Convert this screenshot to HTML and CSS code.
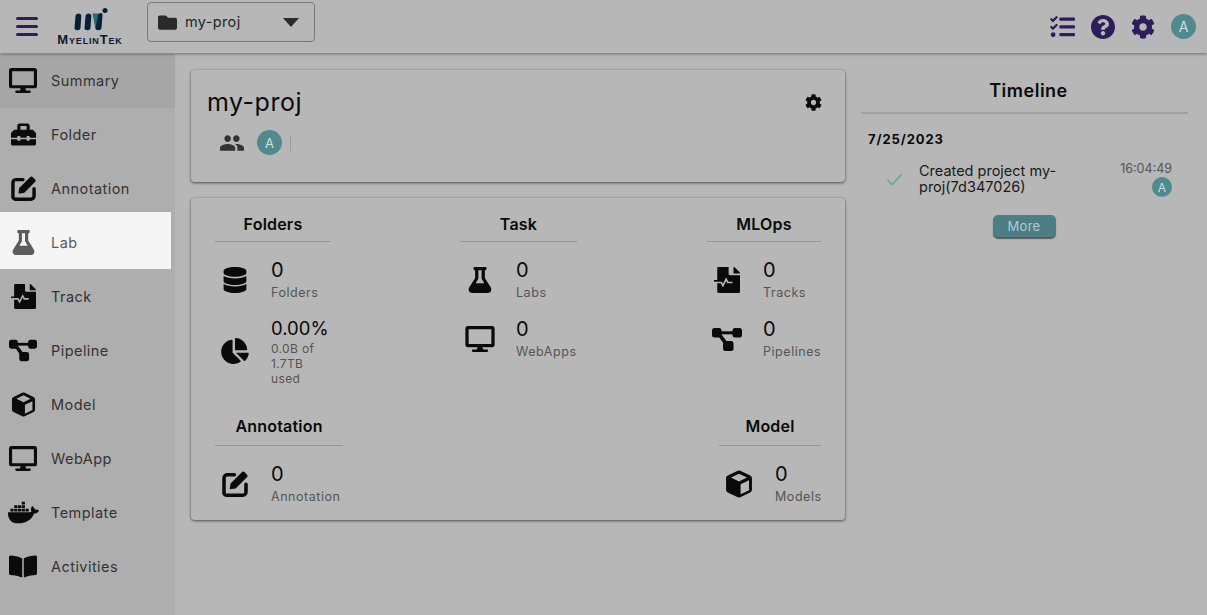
FILE: index.html
```html
<!DOCTYPE html>
<html lang="en">
<head>
<meta charset="utf-8">
<title>my-proj</title>
<link rel="stylesheet" href="styles.css">
</head>
<body>
<svg class="defs" aria-hidden="true">
  <symbol id="i-desktop" viewBox="0 0 576 512"><path d="M528 0H48C21.5 0 0 21.5 0 48v320c0 26.5 21.5 48 48 48h192l-16 48h-72c-13.3 0-24 10.7-24 24s10.7 24 24 24h272c13.3 0 24-10.7 24-24s-10.7-24-24-24h-72l-16-48h192c26.5 0 48-21.5 48-48V48c0-26.5-21.5-48-48-48zm-16 352H64V64h448v288z"/></symbol>
  <symbol id="i-toolbox" viewBox="0 0 512 512"><path d="M502.63 214.63l-45.25-45.25c-6-6-14.14-9.37-22.63-9.37H384V80c0-26.51-21.49-48-48-48H176c-26.51 0-48 21.49-48 48v80H77.25c-8.49 0-16.62 3.37-22.63 9.37L9.37 214.63c-6 6-9.37 14.14-9.37 22.63V320h128v-16c0-8.84 7.16-16 16-16h32c8.84 0 16 7.16 16 16v16h128v-16c0-8.84 7.16-16 16-16h32c8.84 0 16 7.16 16 16v16h128v-82.75c0-8.48-3.37-16.62-9.37-22.62zM320 160H192V80h128v80zm64 208c0 8.84-7.16 16-16 16h-32c-8.84 0-16-7.16-16-16v-16H192v16c0 8.84-7.16 16-16 16h-32c-8.84 0-16-7.16-16-16v-16H0v96c0 17.67 14.33 32 32 32h448c17.67 0 32-14.33 32-32v-96H384v16z"/></symbol>
  <symbol id="i-edit" viewBox="1.500 1 22 22"><path d="M12 4.200H6A2.800 2.800 0 0 0 3.200 7v13A2.800 2.800 0 0 0 6 21.500h13a2.800 2.800 0 0 0 2.800-2.800v-6.500" fill="none" stroke="currentColor" stroke-width="3" stroke-linecap="round"/><path d="M8 16.500l.7-5L18.300 2c.7-.7 1.600-.7 2.200-.1l2.200 2.200c.6.600.6 1.500-.1 2.200l-9.600 9.600z"/></symbol>
  <symbol id="i-flask" viewBox="0 0 448 512"><path d="M437.2 403.5L320 215V64h8c13.3 0 24-10.7 24-24V24c0-13.3-10.7-24-24-24H120c-13.3 0-24 10.7-24 24v16c0 13.300 10.700 24 24 24h8v151L10.800 403.500C-18.500 450.600 15.300 512 70.900 512h306.200c55.700 0 89.400-61.500 60.100-108.500zM137.900 320l48.200-77.600c3.700-5.200 5.800-11.600 5.800-18.400V64h64v160c0 6.900 2.200 13.200 5.800 18.400l48.200 77.600h-172z"/></symbol>
  <symbol id="i-track" viewBox="0 0 512 512"><path d="M288 136V0H88C74.700 0 64 10.700 64 24v232H8c-4.400 0-8 3.600-8 8v16c0 4.400 3.600 8 8 8h140.900c3 0 5.800 1.700 7.200 4.400l19.900 39.800 56.800-113.700c2.900-5.900 11.400-5.900 14.300 0l34.700 69.500H352c8.800 0 16 7.200 16 16s-7.200 16-16 16h-89.900L240 275.800l-56.800 113.700c-2.900 5.900-11.400 5.900-14.300 0L134.100 320H64v168c0 13.300 10.700 24 24 24h400c13.300 0 24-10.700 24-24V160H312c-13.200 0-24-10.800-24-24zm217-31L407.100 7c-4.500-4.500-10.600-7-17-7H384v128h128v-6.100c0-6.300-2.500-12.400-7-16.900z"/></symbol>
  <symbol id="i-pipeline" viewBox="0 0 30 23"><rect x="0" y="0" width="9.500" height="9.500" rx="2.500"/><rect x="20.500" y="0" width="9.500" height="9.500" rx="2.500"/><rect x="11" y="13" width="10.500" height="10" rx="2.500"/><path d="M5 3.300h20v3H5z"/><path d="M4.500 5.500l3-1.800 9 12-3 2.500z"/></symbol>
  <symbol id="i-cube" viewBox="0 0 24 26"><path fill-rule="evenodd" d="M10.800.8c.8-.4 1.600-.4 2.400 0l9.200 4.400c1 .5 1.600 1.400 1.600 2.500v10.600c0 1.100-.6 2-1.600 2.500l-9.200 4.400c-.8.400-1.600.4-2.400 0l-9.200-4.400C.6 20.300 0 19.400 0 18.300V7.700c0-1.100.6-2 1.600-2.500zM12 3.400L4.600 7 12 10.600 19.400 7zM13.500 13.200v9.300l7.800-3.800V9.500z"/></symbol>
  <symbol id="i-docker" viewBox="0 0 640 512"><path d="M349.900 236.300h-66.100v-59.400h66.100v59.400zm0-204.300h-66.100v60.700h66.100V32zm78.200 144.800H362v59.400h66.100v-59.400zm-156.300-72.100h-66.100v60.100h66.100v-60.100zm78.100 0h-66.100v60.100h66.100v-60.100zm276.800 100c-14.400-9.700-47.600-13.200-73.100-8.400-3.300-24-16.700-44.900-41.100-63.700l-14-9.300-9.300 14c-18.400 27.800-23.400 73.600-3.700 103.800-8.700 4.700-25.800 11.100-48.400 10.700H2.400c-8.700 50.800 5.800 116.800 44 162.100 37.100 43.900 92.700 66.200 165.400 66.200 157.400 0 273.900-72.500 328.400-204.200 21.400.4 67.600.1 91.300-45.200 1.500-2.500 6.600-13.200 8.500-17.100l-13.300-8.900zm-511.100-27.900h-66v59.400h66.100v-59.400zm78.100 0h-66.100v59.400h66.100v-59.400zm78.100 0h-66.100v59.400h66.100v-59.400zm-78.100-72.100h-66.100v60.100h66.100v-60.100z"/></symbol>
  <symbol id="i-book" viewBox="0 0 576 512"><path d="M542.220 32.050c-54.800 3.110-163.720 14.430-230.960 55.590-4.640 2.840-7.270 7.890-7.270 13.170v363.870c0 11.550 12.630 18.850 23.280 13.490 69.180-34.820 169.230-44.320 218.700-46.920 16.890-.89 30.020-14.430 30.020-30.660V62.750c.01-17.710-15.350-31.740-33.770-30.700zM264.730 87.640C197.500 46.480 88.580 35.170 33.780 32.050 15.360 31.010 0 45.040 0 62.750V400.600c0 16.240 13.130 29.780 30.020 30.660 49.490 2.600 149.590 12.110 218.770 46.950 10.620 5.350 23.210-1.940 23.210-13.460V100.630c0-5.290-2.620-10.140-7.270-12.990z"/></symbol>
  <symbol id="i-database" viewBox="0 0 448 512"><path d="M448 73.143v45.714C448 159.143 347.667 192 224 192S0 159.143 0 118.857V73.143C0 32.857 100.333 0 224 0s224 32.857 224 73.143zM448 176v102.857C448 319.143 347.667 352 224 352S0 319.143 0 278.857V176c48.125 33.143 136.208 48.572 224 48.572S399.874 209.143 448 176zm0 160v102.857C448 479.143 347.667 512 224 512S0 479.143 0 438.857V336c48.125 33.143 136.208 48.572 224 48.572S399.874 369.143 448 336z"/></symbol>
  <symbol id="i-pie" viewBox="0 0 544 512"><path d="M527.790 288H290.500l158.030 158.030c6.040 6.040 15.980 6.530 22.190.68 38.700-36.460 65.320-85.610 73.130-140.860 1.340-9.460-6.510-17.850-16.060-17.850zm-15.830-64.800C503.720 103.740 408.260 8.280 288.800.04 279.680-.59 272 7.100 272 16.240V240h223.770c9.140 0 16.820-7.680 16.190-16.800zM224 288V50.710c0-9.550-8.390-17.400-17.840-16.060C86.990 51.490-4.100 155.600.14 280.370 4.500 408.510 114.830 513.590 243.030 511.980c50.400-.63 96.970-16.870 135.260-44.030 7.900-5.600 8.420-17.230 1.570-24.080L224 288z"/></symbol>
  <symbol id="i-people" viewBox="1 5 22 14"><path d="M16 11c1.660 0 2.990-1.340 2.990-3S17.660 5 16 5c-1.660 0-3 1.340-3 3s1.340 3 3 3zm-8 0c1.660 0 2.990-1.340 2.990-3S9.660 5 8 5C6.340 5 5 6.340 5 8s1.340 3 3 3zm0 2c-2.330 0-7 1.170-7 3.500V19h14v-2.500c0-2.330-4.670-3.500-7-3.500zm8 0c-.29 0-.62.02-.97.05 1.160.84 1.970 1.970 1.970 3.450V19h6v-2.500c0-2.330-4.670-3.500-7-3.500z"/></symbol>
  <symbol id="i-cog" viewBox="0 0 512 512"><path d="M487.400 315.700l-42.600-24.600c4.300-23.200 4.300-47 0-70.200l42.600-24.600c4.900-2.800 7.100-8.600 5.500-14-11.100-35.600-30-67.800-54.700-94.600-3.800-4.100-10-5.100-14.800-2.300L380.800 110c-17.900-15.400-38.500-27.300-60.800-35.100V25.800c0-5.600-3.900-10.500-9.400-11.700-36.700-8.200-74.300-7.800-109.200 0-5.500 1.200-9.400 6.100-9.400 11.700V75c-22.200 7.900-42.800 19.800-60.800 35.100L88.700 85.500c-4.900-2.800-11-1.900-14.800 2.300-24.700 26.700-43.600 58.900-54.700 94.600-1.700 5.400.6 11.200 5.500 14L67.300 221c-4.300 23.200-4.300 47 0 70.200l-42.600 24.600c-4.900 2.800-7.100 8.600-5.500 14 11.100 35.600 30 67.800 54.700 94.600 3.800 4.100 10 5.100 14.800 2.300l42.600-24.600c17.900 15.400 38.500 27.300 60.800 35.100v49.200c0 5.600 3.900 10.500 9.400 11.700 36.700 8.200 74.300 7.800 109.200 0 5.500-1.200 9.400-6.100 9.400-11.700v-49.200c22.200-7.900 42.800-19.800 60.800-35.100l42.600 24.600c4.900 2.800 11 1.900 14.800-2.300 24.700-26.700 43.600-58.900 54.700-94.600 1.500-5.500-.7-11.300-5.600-14.100zM256 336c-44.100 0-80-35.900-80-80s35.900-80 80-80 80 35.900 80 80-35.900 80-80 80z"/></symbol>
  <symbol id="i-help" viewBox="8 8 496 496"><path d="M504 256c0 136.997-111.043 248-248 248S8 392.997 8 256C8 119.083 119.043 8 256 8s248 111.083 248 248zM262.655 90c-54.497 0-89.255 22.957-116.549 63.758-3.536 5.286-2.353 12.415 2.715 16.258l34.699 26.310c5.205 3.947 12.621 3.008 16.665-2.122 17.864-22.658 30.113-35.797 57.303-35.797 20.429 0 45.698 13.148 45.698 32.958 0 14.976-12.363 22.667-32.534 33.976C247.128 238.528 216 254.941 216 296v4c0 6.627 5.373 12 12 12h56c6.627 0 12-5.373 12-12v-1.333c0-28.462 83.186-29.647 83.186-106.667 0-58.002-60.165-102-116.531-102zM256 338c-25.365 0-46 20.635-46 46 0 25.364 20.635 46 46 46s46-20.636 46-46c0-25.365-20.635-46-46-46z"/></symbol>
  <symbol id="i-tasks" viewBox="0 32 512 432"><path d="M139.610 35.500a12 12 0 0 0-17 0L58.930 98.810l-22.700-22.120a12 12 0 0 0-17 0L3.530 92.410a12 12 0 0 0 0 17l47.590 47.400a12.780 12.780 0 0 0 17.610 0l15.590-15.620L156.520 69a12.090 12.090 0 0 0 .09-17zm0 159.190a12 12 0 0 0-17 0l-63.680 63.720-22.700-22.100a12 12 0 0 0-17 0L3.530 252a12 12 0 0 0 0 17L51 316.500a12.770 12.770 0 0 0 17.600 0l15.700-15.690 72.200-72.220a12 12 0 0 0 .09-16.900zM64 368c-26.490 0-48.590 21.500-48.590 48S37.530 464 64 464a48 48 0 0 0 0-96zm432 16H208a16 16 0 0 0-16 16v32a16 16 0 0 0 16 16h288a16 16 0 0 0 16-16v-32a16 16 0 0 0-16-16zm0-320H208a16 16 0 0 0-16 16v32a16 16 0 0 0 16 16h288a16 16 0 0 0 16-16V80a16 16 0 0 0-16-16zm0 160H208a16 16 0 0 0-16 16v32a16 16 0 0 0 16 16h288a16 16 0 0 0 16-16v-32a16 16 0 0 0-16-16z"/></symbol>
  <symbol id="i-folder" viewBox="0 64 512 384"><path d="M464 128H272l-64-64H48C21.490 64 0 85.490 0 112v288c0 26.510 21.490 48 48 48h416c26.510 0 48-21.490 48-48V176c0-26.510-21.490-48-48-48z"/></symbol>
</svg>

<header class="topbar">
  <div class="topbar-left">
    <button class="burger" aria-label="Menu"><span></span><span></span><span></span></button>
    <div class="logo">
      <svg class="logo-mark" viewBox="0 0 34 23">
        <path class="logo-navy" d="M.5 20L1.500 8C1.700 4.500 7.500 4.500 7.300 8L6.500 20C6.300 23 .3 23 .5 20z"/>
        <path class="logo-navy" d="M10.500 20l1-12c.2-3.500 6-3.500 5.800 0l-.8 12c-.2 3-6.200 3-6 0z"/>
        <path class="logo-teal" d="M18.500 5.500h6l2.500 15.500h-5.500z"/>
        <path class="logo-navy" d="M21.500 20l2.500-12.500c.7-3.500 5-3 4.500 0L27.500 20c-.3 3-6.500 3-6 0z"/>
        <circle class="logo-navy" cx="31" cy="2.600" r="2.500"/>
      </svg>
      <span class="logo-text">MyelinTek</span>
    </div>
    <div class="project-select">
      <svg class="select-folder"><use href="#i-folder"/></svg>
      <span class="select-name">my-proj</span>
      <span class="caret"></span>
    </div>
  </div>
  <div class="topbar-right">
    <svg class="top-icon top-tasks"><use href="#i-tasks"/></svg>
    <svg class="top-icon"><use href="#i-help"/></svg>
    <svg class="top-icon"><use href="#i-cog"/></svg>
    <span class="avatar avatar-top">A</span>
  </div>
</header>

<div class="shell">
  <nav class="sidebar">
    <a class="nav-item nav-current"><span class="nav-icon"><svg class="nav-svg nav-wide"><use href="#i-desktop"/></svg></span><span class="nav-label">Summary</span></a>
    <a class="nav-item"><span class="nav-icon"><svg class="nav-svg"><use href="#i-toolbox"/></svg></span><span class="nav-label">Folder</span></a>
    <a class="nav-item"><span class="nav-icon"><svg class="nav-svg"><use href="#i-edit"/></svg></span><span class="nav-label">Annotation</span></a>
    <a class="nav-item nav-spot"><span class="nav-icon"><svg class="nav-svg"><use href="#i-flask"/></svg></span><span class="nav-label">Lab</span></a>
    <a class="nav-item"><span class="nav-icon"><svg class="nav-svg"><use href="#i-track"/></svg></span><span class="nav-label">Track</span></a>
    <a class="nav-item"><span class="nav-icon"><svg class="nav-svg nav-wide"><use href="#i-pipeline"/></svg></span><span class="nav-label">Pipeline</span></a>
    <a class="nav-item"><span class="nav-icon"><svg class="nav-svg"><use href="#i-cube"/></svg></span><span class="nav-label">Model</span></a>
    <a class="nav-item"><span class="nav-icon"><svg class="nav-svg nav-wide"><use href="#i-desktop"/></svg></span><span class="nav-label">WebApp</span></a>
    <a class="nav-item"><span class="nav-icon"><svg class="nav-svg nav-wider"><use href="#i-docker"/></svg></span><span class="nav-label">Template</span></a>
    <a class="nav-item"><span class="nav-icon"><svg class="nav-svg nav-wide"><use href="#i-book"/></svg></span><span class="nav-label">Activities</span></a>
  </nav>

  <main class="content">
    <div class="cards">
      <section class="card project-card">
        <div class="project-head">
          <h1 class="project-title">my-proj</h1>
          <svg class="project-cog"><use href="#i-cog"/></svg>
        </div>
        <div class="project-members">
          <svg class="people-icon"><use href="#i-people"/></svg>
          <span class="avatar avatar-member">A</span>
          <span class="member-divider"></span>
        </div>
      </section>

      <section class="card stats-card">
        <div class="stats-row stats-row-top">
          <div class="stat-group group-folders">
            <h2 class="group-title">Folders</h2>
            <div class="stat">
              <svg class="stat-icon"><use href="#i-database"/></svg>
              <div class="stat-text"><div class="stat-num">0</div><div class="stat-label">Folders</div></div>
            </div>
            <div class="stat stat-usage">
              <svg class="stat-icon"><use href="#i-pie"/></svg>
              <div class="stat-text"><div class="stat-num">0.00%</div><div class="stat-small">0.0B of<br>1.7TB<br>used</div></div>
            </div>
          </div>
          <div class="stat-group group-task">
            <h2 class="group-title">Task</h2>
            <div class="stat">
              <svg class="stat-icon"><use href="#i-flask"/></svg>
              <div class="stat-text"><div class="stat-num">0</div><div class="stat-label">Labs</div></div>
            </div>
            <div class="stat">
              <svg class="stat-icon"><use href="#i-desktop"/></svg>
              <div class="stat-text"><div class="stat-num">0</div><div class="stat-label">WebApps</div></div>
            </div>
          </div>
          <div class="stat-group group-mlops">
            <h2 class="group-title">MLOps</h2>
            <div class="stat">
              <svg class="stat-icon"><use href="#i-track"/></svg>
              <div class="stat-text"><div class="stat-num">0</div><div class="stat-label">Tracks</div></div>
            </div>
            <div class="stat">
              <svg class="stat-icon stat-icon-pipeline"><use href="#i-pipeline"/></svg>
              <div class="stat-text"><div class="stat-num">0</div><div class="stat-label">Pipelines</div></div>
            </div>
          </div>
        </div>
        <div class="stats-row stats-row-bottom">
          <div class="stat-group group-annotation">
            <h2 class="group-title">Annotation</h2>
            <div class="stat">
              <svg class="stat-icon"><use href="#i-edit"/></svg>
              <div class="stat-text"><div class="stat-num">0</div><div class="stat-label">Annotation</div></div>
            </div>
          </div>
          <div class="stat-group group-model">
            <h2 class="group-title">Model</h2>
            <div class="stat">
              <svg class="stat-icon stat-icon-cube"><use href="#i-cube"/></svg>
              <div class="stat-text"><div class="stat-num">0</div><div class="stat-label">Models</div></div>
            </div>
          </div>
        </div>
      </section>
    </div>

    <aside class="timeline">
      <h2 class="timeline-title">Timeline</h2>
      <div class="timeline-date">7/25/2023</div>
      <div class="timeline-entry">
        <svg class="timeline-check" viewBox="0 0 18 14"><path d="M1.500 7.500l5 5L16.500 1.500"/></svg>
        <div class="timeline-text">Created project my-proj(7d347026)</div>
        <div class="timeline-meta">
          <span class="timeline-time">16:04:49</span>
          <span class="avatar avatar-entry">A</span>
        </div>
      </div>
      <button class="more-btn">More</button>
    </aside>
  </main>
</div>
</body>
</html>
```
FILE: styles.css
```css
* { box-sizing: border-box; }
html, body { height: 100%; }
body {
  margin: 0;
  height: 615px;
  overflow: hidden;
  background: #b7b7b7;
  color: #0a0a0a;
  font-family: "Inter", "Liberation Sans", sans-serif;
}
.defs { display: none; }
svg { fill: currentColor; display: block; }

/* top bar */
.topbar {
  height: 53px;
  background: #b7b7b7;
  box-shadow: 0 1px 3px rgba(0, 0, 0, .4);
  display: flex;
  align-items: center;
  justify-content: space-between;
  position: relative;
  z-index: 2;
}
.topbar-left { display: flex; align-items: center; }
.burger {
  width: 22px;
  height: 19px;
  margin-left: 16px;
  padding: 0;
  border: 0;
  background: none;
  display: flex;
  flex-direction: column;
  justify-content: space-between;
}
.burger span { display: block; height: 3px; border-radius: 2px; background: #2e1d5c; }
.logo {
  width: 68px;
  margin-left: 18px;
  display: flex;
  flex-direction: column;
  align-items: center;
}
.logo-mark { width: 34px; height: 23px; margin-left: 1px; }
.logo-navy { fill: #07203a; }
.logo-teal { fill: #1c6f73; }
.logo-text {
  font-family: "Liberation Sans", sans-serif;
  font-variant: small-caps;
  font-weight: 700;
  font-size: 13px;
  line-height: 12px;
  letter-spacing: .85px;
  color: #101830;
  margin-top: 3px;
  white-space: nowrap;
}
.project-select {
  width: 168px;
  height: 40px;
  margin-left: 23px;
  margin-top: -9px;
  padding: 0 15px 0 10px;
  border: 1px solid #7a7a7a;
  border-radius: 4px;
  display: flex;
  align-items: center;
  color: #252525;
}
.select-folder { width: 19px; height: 15px; color: #2a2a2a; }
.select-name { margin-left: 8px; padding-bottom: 1px; font-size: 14.500px; letter-spacing: .35px; flex: 1; }
.caret {
  width: 0;
  height: 0;
  border-left: 8px solid transparent;
  border-right: 8px solid transparent;
  border-top: 9px solid #2a2a2a;
}
.topbar-right {
  display: flex;
  align-items: center;
  gap: 16px;
  padding-right: 11px;
  color: #2e1d5c;
}
.top-icon { width: 24px; height: 24px; }
.top-tasks { width: 25px; height: 21px; }
.avatar {
  border-radius: 50%;
  background: #4e8a8e;
  color: #d3dfe0;
  display: inline-flex;
  align-items: center;
  justify-content: center;
  flex: none;
}
.avatar-top { width: 25px; height: 25px; font-size: 14px; }

/* sidebar */
.shell { display: flex; height: 562px; }
.sidebar {
  width: 175px;
  flex: none;
  margin-top: 1px;
  background: #aeaeae;
}
.nav-item {
  height: 54px;
  padding-bottom: 2px;
  display: flex;
  align-items: center;
  position: relative;
  color: #0b0b0b;
}
.nav-current { background: #a6a6a6; }
.nav-spot::before {
  content: "";
  position: absolute;
  left: 0;
  top: -4px;
  width: 171px;
  height: 57px;
  background: #f5f5f5;
}
.nav-spot .nav-icon, .nav-spot .nav-label { position: relative; color: #5c5c5c; }
.nav-icon { width: 46px; flex: none; display: flex; justify-content: center; }
.nav-svg { width: 25px; height: 25px; }
.nav-wide { width: 28px; }
.nav-wider { width: 31px; }
.nav-label { margin-left: 5px; font-size: 14.500px; letter-spacing: .45px; color: #333; }

/* content */
.content {
  flex: 1;
  display: flex;
  align-items: flex-start;
  padding: 17px 19px 0 16px;
  gap: 16px;
}
.cards { width: 654px; flex: none; display: flex; flex-direction: column; gap: 16px; }
.card {
  background: #b7b7b7;
  border-radius: 4px;
  box-shadow: 0 1px 3px rgba(0, 0, 0, .55), 0 0 2px rgba(0, 0, 0, .15);
}
.project-card { height: 112px; padding: 18px 23px 0 16px; }
.project-head { display: flex; align-items: center; justify-content: space-between; height: 28px; }
.project-title { margin: 0; font-size: 25px; font-weight: 400; letter-spacing: .5px; line-height: 28px; }
.project-cog { width: 17px; height: 17px; }
.project-members { display: flex; align-items: center; margin-top: 14px; padding-left: 13px; }
.people-icon { width: 24px; height: 16px; color: #333; }
.avatar-member { width: 25px; height: 25px; margin-left: 13px; font-size: 13px; }
.member-divider { width: 1px; height: 16px; margin-left: 8px; background: #999; }

.stats-card { height: 322px; padding: 9px 24px 0; }
.stats-row { display: flex; justify-content: space-between; align-items: flex-start; }
.stats-row-top { height: 202px; }
.group-folders { width: 116px; }
.group-task { width: 117px; margin-left: -1px; }
.group-mlops { width: 114px; }
.group-annotation { width: 128px; }
.group-model { width: 102px; }
.group-title {
  margin: 0 0 16px;
  height: 35px;
  padding-top: 7px;
  border-bottom: 1px solid #969696;
  text-align: center;
  font-size: 16px;
  line-height: 20px;
  font-weight: 600;
  letter-spacing: .2px;
}
.stats-row-bottom .group-title { height: 37px; }
.stat { display: flex; align-items: center; margin-bottom: 15px; }
.stat-usage { margin-top: -1px; }
.stat-icon { width: 40px; height: 26px; margin-right: 16px; flex: none; }
.stat-icon-pipeline { height: 23px; }
.stat-icon-cube { height: 28px; }
.stat-text { min-width: 0; }
.stat-num { font-size: 20px; line-height: 24px; letter-spacing: .3px; }
.stat-usage .stat-num { font-size: 18.500px; letter-spacing: 0; }
.stat-label { font-size: 12.500px; line-height: 18px; margin-top: 2px; letter-spacing: .55px; color: #555; white-space: nowrap; }
.stat-small { font-size: 12px; line-height: 15px; margin-top: 1px; letter-spacing: .35px; color: #555; }

/* timeline */
.timeline { flex: 1; display: flex; flex-direction: column; }
.timeline-title {
  margin: 0;
  height: 44px;
  padding: 9px 0 0 8px;
  text-align: center;
  font-size: 18px;
  line-height: 24px;
  font-weight: 600;
  letter-spacing: .5px;
  border-bottom: 2px solid #a0a0a0;
}
.timeline-date {
  margin: 15px 0 0 7px;
  font-size: 13px;
  line-height: 20px;
  font-weight: 700;
  letter-spacing: .9px;
}
.timeline-entry { display: flex; align-items: center; margin-top: 11px; padding: 0 16px 0 25px; }
.timeline-check { width: 17px; height: 13px; margin-top: 1px; fill: none; stroke: #6fa5a8; stroke-width: 2; flex: none; }
.timeline-text { width: 165px; margin-left: 16px; font-size: 14.500px; line-height: 16px; letter-spacing: 0; color: #1a1a1a; }
.timeline-meta { flex: 1; display: flex; flex-direction: column; align-items: flex-end; }
.timeline-time { font-size: 12.500px; line-height: 16px; color: #555; margin-top: 1px; }
.avatar-entry { width: 20px; height: 20px; font-size: 12px; }
.more-btn {
  align-self: center;
  width: 63px;
  height: 22px;
  margin: 18px 0 0 -1px;
  padding: 0;
  border: 0;
  border-radius: 5px;
  background: #4b7f85;
  box-shadow: 0 2px 1px rgba(0, 0, 0, .5);
  color: #b4c9cb;
  font: 13px "Inter", "Liberation Sans", sans-serif;
  letter-spacing: .3px;
}
```
